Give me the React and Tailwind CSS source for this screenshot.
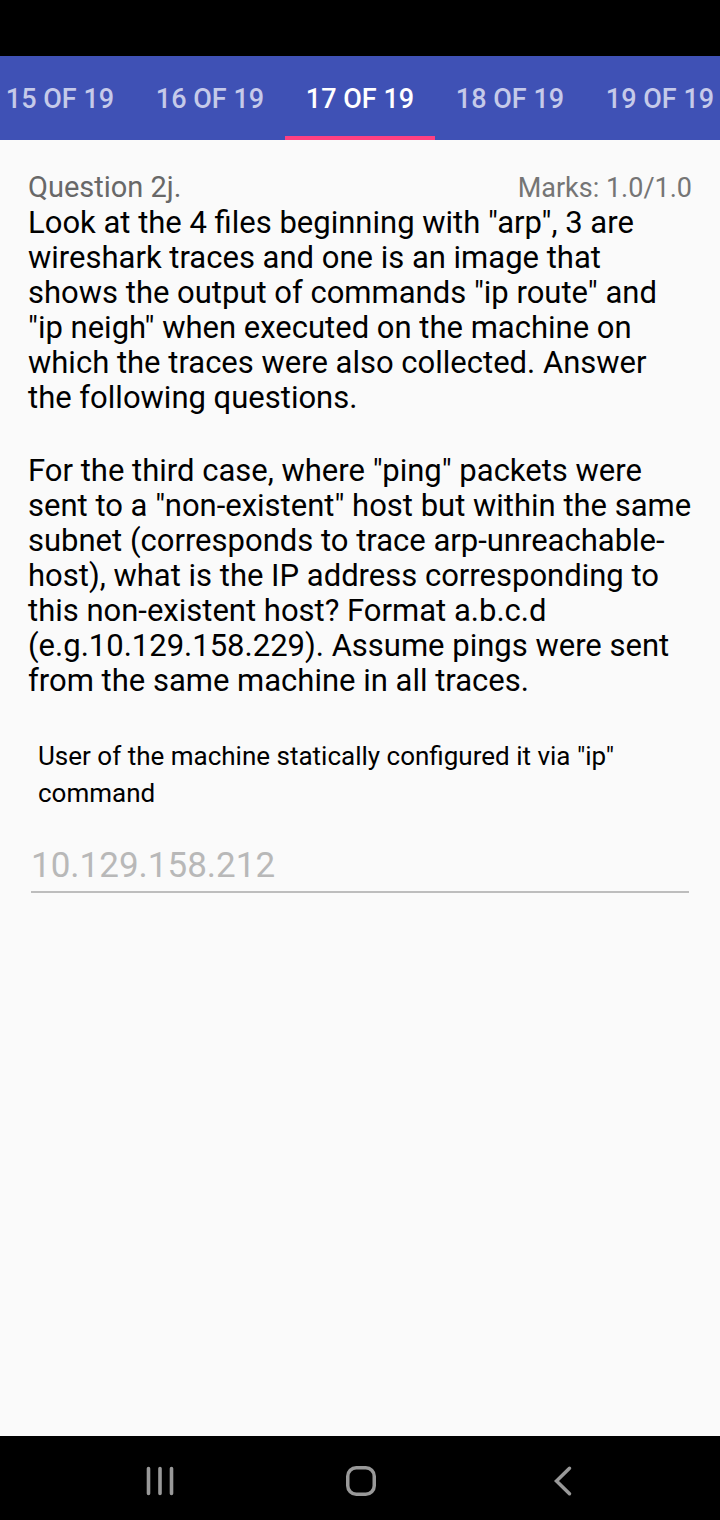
const tabs = ["15 OF 19", "16 OF 19", "17 OF 19", "18 OF 19", "19 OF 19"];

function TabBar() {
  return (
    <nav className="flex h-[84px] justify-center overflow-hidden bg-[#3f51b5]">
      {tabs.map((t, i) => (
        <button
          key={t}
          className={
            "w-[150px] shrink-0 border-b-4 pt-1.5 text-[27px] font-medium whitespace-nowrap " +
            (i === 2 ? "border-[#ff4081] text-white" : "border-transparent text-[#c5cae9]")
          }
        >
          {t}
        </button>
      ))}
    </nav>
  );
}

function NavBar() {
  return (
    <footer className="flex h-[84px] items-center justify-center gap-[141px] bg-black pt-1 text-[#999999]">
      <button aria-label="Recent apps">
        <svg width="60" height="60" viewBox="0 0 60 60" fill="none" stroke="currentColor" strokeWidth="3.6" strokeLinecap="round">
          <path d="M19.500 18.500v25M31 18.500v25M42.500 18.500v25" />
        </svg>
      </button>
      <button aria-label="Home">
        <svg width="60" height="60" viewBox="0 0 60 60" fill="none" stroke="currentColor" strokeWidth="3.5">
          <rect x="17.750" y="17.750" width="26.500" height="26.500" rx="8.500" />
        </svg>
      </button>
      <button aria-label="Back">
        <svg width="60" height="60" viewBox="0 0 60 60" fill="none" stroke="currentColor" strokeWidth="3.5" strokeLinecap="round">
          <path d="M38.500 18.300L25.500 31L38.500 43.700" />
        </svg>
      </button>
    </footer>
  );
}

export default function App() {
  return (
    <div className="flex min-h-screen flex-col bg-[#fafafa] font-['Roboto',sans-serif] text-black">
      <div className="h-14 bg-black" />
      <TabBar />
      <main className="flex-1 px-7 pt-[30px]">
        <div className="flex items-baseline justify-between">
          <h1 className="text-[29px] leading-[34px] text-[#686868]">Question 2j.</h1>
          <span className="text-[27px] leading-[34px] text-[#757575]">Marks: 1.0/1.0</span>
        </div>
        <p className="text-[31px] leading-[35px]">
          Look at the 4 files beginning with "arp", 3 are<br />
          wireshark traces and one is an image that<br />
          shows the output of commands "ip route" and<br />
          "ip neigh" when executed on the machine on<br />
          which the traces were also collected. Answer<br />
          the following questions.
        </p>
        <p className="mt-[38px] text-[31px] leading-[35px]">
          For the third case, where "ping" packets were<br />
          sent to a "non-existent" host but within the same<br />
          subnet (corresponds to trace arp-unreachable-<br />
          host), what is the IP address corresponding to<br />
          this non-existent host? Format a.b.c.d<br />
          (e.g.10.129.158.229). Assume pings were sent<br />
          from the same machine in all traces.
        </p>
        <label htmlFor="answer" className="mt-10 block px-[10px] text-[26px] leading-[37px]">
          User of the machine statically configured it via "ip"<br />
          command
        </label>
        <div className="mt-[27px] px-[3px]">
          <input
            id="answer"
            defaultValue="10.129.158.212"
            disabled
            className="block h-[54px] w-full border-b-2 border-[#bdbdbd] bg-transparent text-[35px] text-[#b8b8b8] outline-none"
          />
        </div>
      </main>
      <NavBar />
    </div>
  );
}
